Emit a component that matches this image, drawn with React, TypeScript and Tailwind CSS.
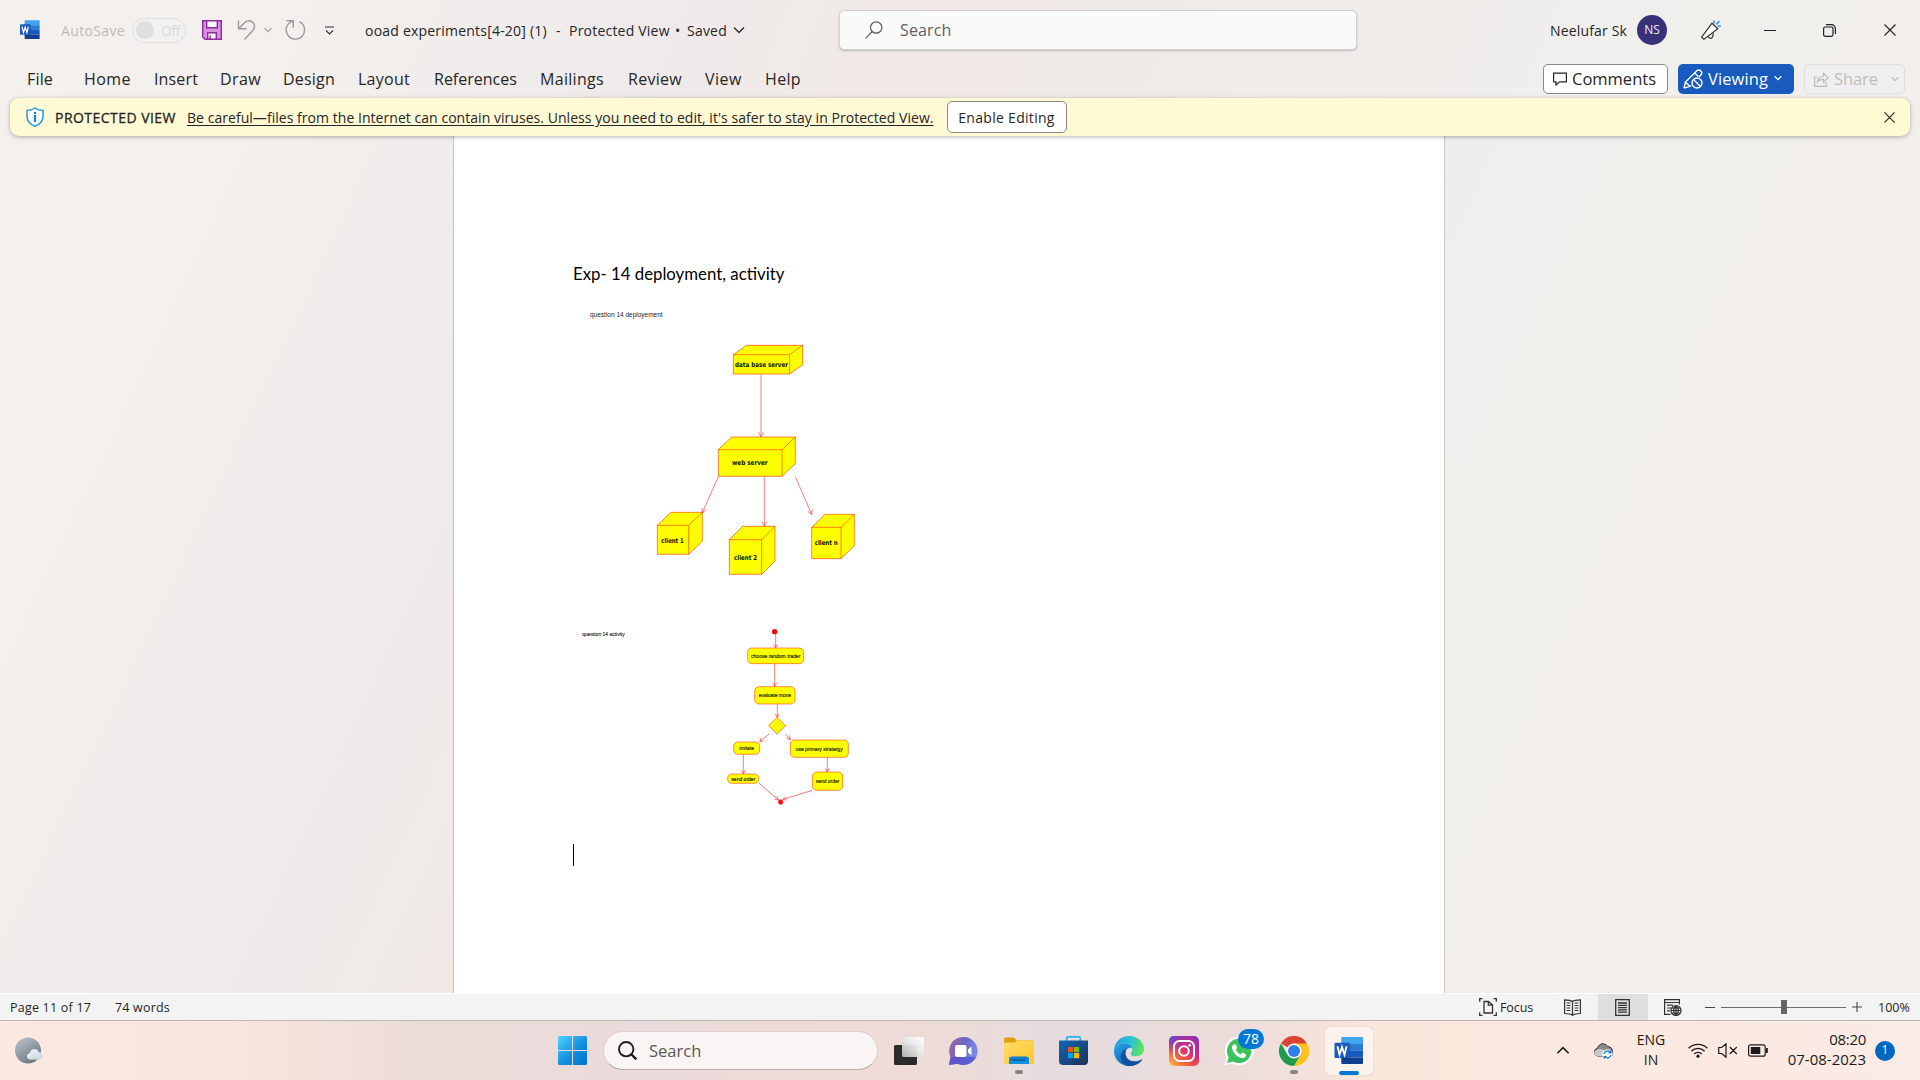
import React from 'react';

type Pt = [number, number];

const Chevron = ({ className, w = 1.3 }: { className: string; w?: number }) => (
  <svg viewBox="0 0 12 8" className={className} fill="none" stroke="currentColor" strokeWidth={w}>
    <path d="M1 1.5 6 6.5 11 1.5" />
  </svg>
);

const Cross = ({ className }: { className: string }) => (
  <svg viewBox="0 0 12 12" className={className} fill="none" stroke="currentColor" strokeWidth="1.2">
    <path d="M.5.5 11.5 11.5M11.5.5.5 11.5" />
  </svg>
);

const WordLogo = ({ className }: { className: string }) => (
  <svg viewBox="0 0 30 29" className={className}>
    <path d="M8 0h20.5a1 1 0 0 1 1 1v6.5H7V1a1 1 0 0 1 1-1z" fill="#41a5ee" />
    <path d="M7 7.3h22.5v7H7z" fill="#2b7cd3" />
    <path d="M7 14.2h22.5v7H7z" fill="#185abd" />
    <path d="M7 21.2h22.5V27a1 1 0 0 1-1 1H8a1 1 0 0 1-1-1z" fill="#103f91" />
    <rect x="7" y="6.5" width="9.5" height="17" fill="#0b2f6b" opacity=".3" />
    <rect x="0" y="6" width="15.5" height="15.8" rx="1.3" fill="#185abd" />
    <path d="M3 9.5 5.2 18.3 7.75 10.4 10.3 18.3 12.5 9.5" fill="none" stroke="#fff" strokeWidth="1.9" />
  </svg>
);

function TitleBar() {
  return (
    <div className="flex h-[60px] items-center pl-5 text-[14px] text-[#262626]">
      <WordLogo className="h-5 w-5" />
      <span className="ml-[21px] w-[71px] tracking-[0.35px] text-[#bdbbba]">AutoSave</span>
      <div className="flex h-[25px] w-[54px] items-center rounded-full border border-[#dfdfe0] bg-[#f1f1f2] pl-[3px]">
        <div className="h-[18px] w-[18px] rounded-full bg-[#dfdfdf]" />
        <span className="ml-[7px] tracking-[-0.6px] text-[#dadada]">Off</span>
      </div>
      <svg viewBox="0 0 20 20" className="ml-4 h-5 w-5" stroke="#8d2c9b" strokeWidth="1.4">
        <path d="M.7.7h18.6v18.6H3L.7 17z" fill="#d98ee0" />
        <path d="M4.7.7h10.6v7H4.7z" fill="#faf5fb" />
        <path d="M5.7 19.3v-6.6h8.6v6.6z" fill="#faf5fb" />
        <path d="M8.2 15.5v3.5" />
      </svg>
      <svg viewBox="0 0 20 20" className="ml-[15px] h-5 w-5" fill="none" stroke="#9c9a99" strokeWidth="1.4">
        <path d="M1.5.5v8.2h8M1.8 8.4 7 3.2C10-.4 14.5.2 16.4 3c1.6 2.5 1.3 5.3-.6 7.5L7.5 19.5" />
      </svg>
      <Chevron className="ml-[7px] h-[6px] w-2 text-[#a5a3a2]" w={2} />
      <svg viewBox="0 0 21 20" className="ml-[13px] h-5 w-[21px]" fill="none" stroke="#9c9a99" strokeWidth="1.4">
        <path d="M1.5.7h6.8v7M14.5 1.7a9.2 9.2 0 1 1-8.8.3L8.2.9" />
      </svg>
      <svg viewBox="0 0 9 9" className="ml-[19px] h-[9px] w-[9px]" fill="none" stroke="#333" strokeWidth="1.2">
        <path d="M0 1h9M1 4.5l3.5 3.5L8 4.5" />
      </svg>
      <div className="ml-[31px] flex w-[474px] items-center whitespace-nowrap tracking-[0.21px]">
        <span className="w-[191px]">ooad experiments[4-20] (1)</span>
        <span className="w-[13px]">-</span>
        <span className="w-[106px]">Protected View</span>
        <span className="w-3">•</span>
        <span className="w-[46px]">Saved</span>
        <Chevron className="h-2 w-3" />
      </div>
      <div className="flex h-10 w-[518px] items-center rounded-[5px] border border-[#d2d0ce] bg-[#fafafa] pl-[25px] shadow-[0_1px_2px_rgba(0,0,0,0.22)]">
        <svg viewBox="0 0 18 18" className="h-[18px] w-[18px]" fill="none" stroke="#605e5c" strokeWidth="1.2">
          <circle cx="11.2" cy="6.5" r="5.7" />
          <path d="M7.2 10.5.6 17.3" />
        </svg>
        <span className="ml-[17px] text-[16px] tracking-[0.14px] text-[#616161]">Search</span>
      </div>
      <span className="ml-[193px] w-[87px] whitespace-nowrap tracking-[0.16px]">Neelufar Sk</span>
      <div className="flex h-[30px] w-[30px] items-center justify-center rounded-full bg-[#373277] text-[12px] text-[#f0ecff]">NS</div>
      <svg viewBox="0 0 20 20" className="ml-[34px] h-5 w-5" fill="none" stroke="#333" strokeWidth="1.2">
        <path d="M.7 17.2 11 3.2l5.8 5.6L3 19.2z" fill="#fff" />
        <path d="M7.2 16.3c1 3.4 5.3 2.8 4.9-3.5" />
        <path d="M13 3.5V.5M15.3 4.6 18.3 1M16.6 6.3l3.2-.4" stroke="#2b88d8" strokeWidth="1.5" />
      </svg>
      <div className="ml-[43px] h-px w-3 bg-[#222]" />
      <svg viewBox="0 0 13 13" className="ml-[47px] h-[13px] w-[13px]" fill="none" stroke="#222" strokeWidth="1.2">
        <rect x=".6" y="3" width="9.4" height="9.4" rx="1.8" />
        <path d="M3 .7h5.4a4 4 0 0 1 4 4v5.3" />
      </svg>
      <Cross className="ml-[48px] h-3 w-3" />
    </div>
  );
}

function MenuBar() {
  return (
    <div className="flex h-[38px] items-center pb-px pl-[27px] text-[16px] text-[#262626] *:pt-px">
      <span className="w-[57px] tracking-[0.17px]">File</span>
      <span className="w-[70px] tracking-[0.45px]">Home</span>
      <span className="w-[66px] tracking-[0.14px]">Insert</span>
      <span className="w-[63px] tracking-[0.39px]">Draw</span>
      <span className="w-[75px] tracking-[0.21px]">Design</span>
      <span className="w-[76px] tracking-[0.27px]">Layout</span>
      <span className="w-[106px]">References</span>
      <span className="w-[88px] tracking-[0.31px]">Mailings</span>
      <span className="w-[77px] tracking-[0.29px]">Review</span>
      <span className="w-[60px] tracking-[0.51px]">View</span>
      <span className="tracking-[0.35px]">Help</span>
      <div className="mr-[15px] ml-auto flex gap-[10px] text-[16.5px]">
        <div className="flex h-[30px] w-[125px] items-center rounded-[5px] border border-[#8a8886] bg-white pl-[9px]">
          <svg viewBox="0 0 14 14" className="h-[14px] w-[14px]" fill="none" stroke="#262626" strokeWidth="1.2">
            <path d="M.6 1.2h12.8v8.6H6.5L3 13V9.8H.6z" />
          </svg>
          <span className="ml-[5px] pt-px">Comments</span>
        </div>
        <div className="flex h-[30px] w-[116px] items-center rounded-[5px] bg-[#185abd] pl-[5px] text-white">
          <svg viewBox="0 0 20 20" className="h-5 w-5" fill="none" stroke="#fff" strokeWidth="1.4">
            <path d="M1 19.2 2.4 13 13.8 1.8c2.6-2.3 6.5 1.2 4.2 4L16 8M8.3 16.8 1 19.2M11.7 4l3.6 3.6M2.6 13.3l4.2 4" />
            <circle cx="14" cy="14" r="5" />
            <path d="m10.5 10.5 7 7" />
          </svg>
          <span className="ml-[5px] pt-px tracking-[0.1px]">Viewing</span>
          <Chevron className="mb-0.5 ml-[6px] h-[6px] w-2" w={2} />
        </div>
        <div className="flex h-[30px] w-[101px] items-center rounded-[5px] border border-[#dedede] bg-[#f0efef] pl-[9px] text-[#bdbdbd]">
          <svg viewBox="0 0 15 15" className="h-[15px] w-[15px]" fill="none" stroke="currentColor" strokeWidth="1.2">
            <path d="M3.5 5H.6v9.4h11.6V10.5M3.5 9.6c.6-3.5 2.6-5 6-5.1V1.3l4.6 4.6-4.6 4.5V7.4c-3-.1-4.5.6-6 2.2z" />
          </svg>
          <span className="ml-[5px] pt-px tracking-[-0.1px]">Share</span>
          <Chevron className="ml-[13px] h-[6px] w-2" w={2} />
        </div>
      </div>
    </div>
  );
}

function ProtectedBanner() {
  return (
    <div className="relative z-10 mx-[10px] flex h-[38px] items-center rounded-[9px] bg-[#fff9d4] pl-4 text-[14px] whitespace-nowrap text-[#262626] shadow-[0_1px_4px_rgba(0,0,0,0.3)]">
      <svg viewBox="0 0 18 20" className="h-5 w-[18px]" fill="#fff" stroke="#2f96d4" strokeWidth="1.5">
        <path d="M9 1c2.3 1.7 5 2.5 8 2.6V9c0 5-3 8.3-8 10.2C4 17.3 1 14 1 9V3.6C4 3.5 6.7 2.7 9 1z" />
        <path d="M9 8v7M9 5v2" stroke="#1180d0" strokeWidth="2.2" />
      </svg>
      <span className="ml-[11px] w-[132px] tracking-[0.46px] [-webkit-text-stroke:0.3px_#262626]">PROTECTED VIEW</span>
      <span className="w-[760px] tracking-[0.042px] underline underline-offset-2">Be careful—files from the Internet can contain viruses. Unless you need to edit, it's safer to stay in Protected View.</span>
      <button className="h-8 w-[120px] rounded-[5px] border border-[#8a8886] bg-white pr-px tracking-[0.3px]">Enable Editing</button>
      <Cross className="mr-[15px] ml-auto h-[11px] w-[11px]" />
    </div>
  );
}

const Arrow = ({ from: [x1, y1], to: [x2, y2], s = 15 }: { from: Pt; to: Pt; s?: number }) => {
  const a = Math.atan2(y2 - y1, x2 - x1);
  const tip = (d: number) => `${x2 - s * Math.cos(a + d)} ${y2 - s * Math.sin(a + d)}`;
  return <path d={`M${x1} ${y1}L${x2} ${y2}M${tip(0.52)}L${x2} ${y2}L${tip(-0.52)}`} fill="none" stroke="#ff0000" strokeOpacity=".52" strokeWidth="3" />;
};

const cubes = [
  { x: 520, y: 314, w: 169, h: 58, dx: 39, dy: 28, label: 'data base server', tx: 525, tw: 159, ty: 350 },
  { x: 475, y: 599, w: 191, h: 80, dx: 40, dy: 38, label: 'web server', tx: 516, tw: 107, ty: 645 },
  { x: 292, y: 826, w: 94, h: 87, dx: 41, dy: 39, label: 'client 1', tx: 304, tw: 67, ty: 878 },
  { x: 508, y: 869, w: 97, h: 104, dx: 40, dy: 40, label: 'client 2', tx: 522, tw: 69, ty: 929 },
  { x: 755, y: 832, w: 88, h: 94, dx: 40, dy: 39, label: 'client n', tx: 764, tw: 69, ty: 886 },
];

const DeploymentDiagram = () => (
  <svg viewBox="0 120 1200 900" className="mt-[2px] block h-[300px] w-[400px]">
    <text x="90" y="200" fontSize="21" textLength="218" lengthAdjust="spacingAndGlyphs" fill="#222" className="font-['Liberation_Sans']">question 14 deployement</text>
    {cubes.map((c) => (
      <g key={c.label}>
        <path
          d={`M${c.x} ${c.y}l${c.dx} ${-c.dy}h${c.w}v${c.h}l${-c.dx} ${c.dy}h${-c.w}zM${c.x} ${c.y}h${c.w}v${c.h}M${c.x + c.w} ${c.y}l${c.dx} ${-c.dy}`}
          fill="#ffff00"
          stroke="#ff3000"
          strokeOpacity=".6"
          strokeWidth="3"
        />
        <text x={c.tx} y={c.ty} fontSize="20" fontWeight="700" textLength={c.tw} lengthAdjust="spacingAndGlyphs" fill="#111100" className="font-['DejaVu_Sans']">{c.label}</text>
      </g>
    ))}
    <Arrow from={[603, 373]} to={[603, 560]} />
    <Arrow from={[475, 680]} to={[427, 788]} />
    <Arrow from={[613, 680]} to={[613, 828]} />
    <Arrow from={[706, 680]} to={[755, 793]} />
  </svg>
);

const steps = [
  { x: 563, y: 144, w: 168, h: 47, label: 'choose random trader', tx: 573, tw: 148, ty: 174 },
  { x: 584, y: 260, w: 121, h: 52, label: 'evaluate move', tx: 596, tw: 97, ty: 292 },
  { x: 521, y: 426, w: 78, h: 37, label: 'imitate', tx: 538, tw: 44, ty: 451 },
  { x: 503, y: 522, w: 93, h: 28, label: 'send order', tx: 514, tw: 72, ty: 542 },
  { x: 691, y: 420, w: 174, h: 52, label: 'use primary stratergy', tx: 707, tw: 141, ty: 453 },
  { x: 757, y: 516, w: 91, h: 55, label: 'send order', tx: 767, tw: 71, ty: 550 },
];

const ActivityDiagram = () => (
  <svg viewBox="0 0 1200 720" className="mt-[10px] block h-[240px] w-[400px]">
    <text x="67" y="107" fontSize="17" textLength="127" lengthAdjust="spacingAndGlyphs" fill="#222" stroke="#222" strokeWidth=".4" className="font-['Liberation_Sans']">question 14 activity</text>
    <circle cx="644" cy="95" r="8" fill="#ff0000" />
    {steps.map((s, i) => (
      <g key={i}>
        <rect x={s.x} y={s.y} width={s.w} height={s.h} rx="13" fill="#ffff00" stroke="#ff3000" strokeOpacity=".55" strokeWidth="3" />
        <text x={s.tx} y={s.ty} fontSize="18" textLength={s.tw} lengthAdjust="spacingAndGlyphs" fill="#222200" stroke="#222200" strokeWidth=".5" className="font-['Liberation_Sans']">{s.label}</text>
      </g>
    ))}
    <path d="M651 352 677 377 651 402 626 377z" fill="#ffff00" stroke="#ff3000" strokeOpacity=".55" strokeWidth="3" />
    <Arrow from={[647, 102]} to={[647, 143]} s={12} />
    <Arrow from={[644, 192]} to={[644, 259]} s={12} />
    <Arrow from={[652, 313]} to={[652, 352]} s={12} />
    <Arrow from={[627, 402]} to={[599, 425]} s={12} />
    <Arrow from={[676, 402]} to={[691, 419]} s={12} />
    <Arrow from={[550, 464]} to={[550, 521]} s={12} />
    <Arrow from={[802, 473]} to={[802, 515]} s={12} />
    <Arrow from={[596, 549]} to={[655, 600]} s={12} />
    <Arrow from={[757, 571]} to={[669, 598]} s={12} />
    <circle cx="662" cy="606" r="7.5" fill="#ff0000" stroke="#ff7070" strokeWidth="2" />
  </svg>
);

function StatusBar() {
  return (
    <div className="flex h-7 items-center border-t border-b border-t-white border-b-[#bdb5b3] bg-[#f3f3f3] pl-[10px] text-[12.5px] text-[#262626]">
      <span className="w-[105px] pt-0.5 tracking-[0.22px]">Page 11 of 17</span>
      <span className="pt-0.5 tracking-[0.19px]">74 words</span>
      <svg viewBox="0 0 18 18" className="ml-auto h-[18px] w-[18px]" fill="none" stroke="#333" strokeWidth="1.3">
        <path d="M3.5.7H.7v3M14.5.7h2.8v3M3.5 17.3H.7v-3M14.5 17.3h2.8v-3M5 3.5h4.5L13.5 7v8H5zM9.3 3.5V7.2h4" />
      </svg>
      <span className="ml-[3px] w-[64px] pt-0.5 tracking-[-0.1px]">Focus</span>
      <svg viewBox="0 0 17 17" className="h-[17px] w-[17px]" fill="none" stroke="#333" strokeWidth="1.2">
        <path d="M8.5 2.5C6.5.8 3.5.8.6.8v13.7c3 0 6 0 7.9 1.8 2-1.8 5-1.8 7.9-1.8V.8c-3 0-6 0-7.9 1.7zM8.5 2.5v14M2.6 4h3.8M2.6 6.5h3.8M2.6 9h3.8M2.6 11.5h3.8M10.6 4h3.8M10.6 6.5h3.8M10.6 9h3.8M10.6 11.5h3.8" />
      </svg>
      <div className="ml-[17px] flex h-[26px] w-[50px] items-center justify-center bg-[#dfdfdf]">
        <svg viewBox="0 0 15 17" className="mr-px h-[17px] w-[15px]" fill="none" stroke="#333" strokeWidth="1.3">
          <path d="M.7.7h13.6v15.6H.7zM3 4h9M3 6.3h9M3 8.6h9M3 10.9h9M3 13.2h9" />
        </svg>
      </div>
      <svg viewBox="0 0 18 17" className="ml-4 h-[17px] w-[18px]" fill="none" stroke="#333" strokeWidth="1.2">
        <path d="M6.5 15.4H.6V.6h14.8v5M.6 3.5h14.8M3 6.2h6M3 9h4M3 11.8h3" />
        <circle cx="12" cy="11.5" r="5" fill="#f3f3f3" />
        <path d="M7 11.5h10M12 6.5v10M12 6.5c-3.2 3-3.2 7 0 10M12 6.5c3.2 3 3.2 7 0 10M8 9h8M8 14h8" />
      </svg>
      <div className="ml-[23px] h-px w-[10px] bg-[#444]" />
      <div className="ml-[6px] flex h-[26px] w-[125px] items-center">
        <div className="h-px w-[60px] bg-[#6d6d6d]" />
        <div className="h-[14px] w-[6px] bg-[#666]" />
        <div className="h-px flex-1 bg-[#6d6d6d]" />
      </div>
      <svg viewBox="0 0 10 10" className="ml-[6px] h-[10px] w-[10px]" stroke="#444" strokeWidth="1.1">
        <path d="M0 5h10M5 0v10" />
      </svg>
      <span className="mr-[9px] ml-4 w-[33px] pt-0.5">100%</span>
    </div>
  );
}

const FolderIcon = () => (
  <svg viewBox="0 0 30 28" className="h-7 w-[30px]">
    <defs>
      <linearGradient id="folder" x1="0" y1="0" x2="1" y2="1"><stop offset="0" stopColor="#ffdc6b" /><stop offset="1" stopColor="#fcc52c" /></linearGradient>
      <linearGradient id="clip" x1="0" y1="0" x2="0" y2="1"><stop offset="0" stopColor="#1079d0" /><stop offset="1" stopColor="#1592e0" /></linearGradient>
    </defs>
    <path d="M0 2a1.5 1.5 0 0 1 1.5-1.5h8.3L13 3.5h15.5A1.5 1.5 0 0 1 30 5v8H0z" fill="#dda10c" />
    <path d="M0 7.5c0-1.5.8-2 2-2h8.5l2.500-2h15.500A1.500 1.500 0 0 1 30 5v20.500A1.500 1.500 0 0 1 28.500 27h-27A1.500 1.500 0 0 1 0 25.500z" fill="url(#folder)" />
    <path d="M5 27v-4.500a3 3 0 0 1 3-3h14a3 3 0 0 1 3 3V27z" fill="url(#clip)" />
    <path d="M8.500 23h13" stroke="#0a559c" strokeWidth="1.3" />
  </svg>
);

const StoreIcon = () => (
  <svg viewBox="0 0 29 29" className="h-[29px] w-[29px]">
    <defs><linearGradient id="store" x1="0" y1="0" x2="1" y2="1"><stop offset="0" stopColor="#0f68b4" /><stop offset="1" stopColor="#1e2f58" /></linearGradient></defs>
    <path d="M7.7 6V2.3c0-.9.5-1.4 1.4-1.4h10.8c.9 0 1.4.5 1.4 1.4V6" fill="none" stroke="#2bb5f0" strokeWidth="1.7" />
    <path d="M0 4.500h29V25a4 4 0 0 1-4 4H4a4 4 0 0 1-4-4z" fill="url(#store)" />
    <path d="M9 11h5.200v5.200H9z" fill="#f25022" /><path d="M15 11h5.200v5.200H15z" fill="#7fba00" />
    <path d="M9 17h5.200v5.200H9z" fill="#00a4ef" /><path d="M15 17h5.200v5.200H15z" fill="#ffb900" />
  </svg>
);

const EdgeIcon = () => (
  <svg viewBox="0 0 30 30" className="h-[30px] w-[30px]">
    <defs>
      <linearGradient id="edgeTop" x1="0" y1=".3" x2="1" y2=".5"><stop offset="0" stopColor="#1b9de2" /><stop offset=".55" stopColor="#2cc3d0" /><stop offset="1" stopColor="#62e552" /></linearGradient>
      <linearGradient id="edgeLeft" x1="0" y1="0" x2=".6" y2="1"><stop offset="0" stopColor="#2aa5ea" /><stop offset="1" stopColor="#0f62b8" /></linearGradient>
    </defs>
    <path d="M0 14C.8 5.500 7.200 0 15 0c8.600 0 15 6 15 12.700 0 4.300-3.200 7.600-7.800 7.600-3.600 0-5.400-1.200-5.400-2.400 0-.9 1.400-1.500 1.400-4C18.200 10.500 14.500 7.300 9.500 7.300 5 7.300 1.500 10 0 14z" fill="url(#edgeTop)" />
    <path d="M0 14c1.500-4.300 5-6.700 9.500-6.700 4.200 0 7.500 2 8.500 4.700-3-1.200-7.200 1.500-7.200 6.500 0 6 5 9.800 9.200 10.700A15 15 0 0 1 0 14z" fill="url(#edgeLeft)" />
    <path d="M12.500 12.700C9.500 19 13.500 26 22 25.200c2.500-.3 4.300-1.300 5.500-1.800.6-.2.900.3.500.8-2 2.800-6.600 5.800-11.500 5.700C9 29.500 6.200 23.500 6.800 19.500c.4-3.200 2.600-5.800 5.700-6.800z" fill="#10529c" />
  </svg>
);

const InstagramIcon = () => (
  <svg viewBox="0 0 30 30" className="h-[30px] w-[30px]">
    <defs>
      <linearGradient id="insta" x1=".9" y1="0" x2=".1" y2="1"><stop offset="0" stopColor="#8a2fc0" /><stop offset=".4" stopColor="#d5297b" /><stop offset=".72" stopColor="#f5603c" /><stop offset="1" stopColor="#fdb44b" /></linearGradient>
      <radialGradient id="instaBlue" cx=".05" cy="0" r=".6"><stop offset="0" stopColor="#4a4fd8" /><stop offset="1" stopColor="#7a35c8" stopOpacity="0" /></radialGradient>
    </defs>
    <rect width="30" height="30" rx="5" fill="url(#insta)" /><rect width="30" height="30" rx="5" fill="url(#instaBlue)" />
    <rect x="5" y="5" width="20" height="20" rx="5.5" fill="none" stroke="#fff" strokeWidth="2" />
    <circle cx="15" cy="15" r="4.8" fill="none" stroke="#fff" strokeWidth="2" /><circle cx="20.7" cy="9.3" r="1.3" fill="#fff" />
  </svg>
);

const ChromeIcon = () => (
  <svg viewBox="0 0 30 30" className="h-[30px] w-[30px]">
    <path d="M15 15 2 7.500A15 15 0 0 1 28 7.500z" fill="#dd4335" />
    <path d="M28 7.500A15 15 0 0 1 15 30l6.500-11.200L15 7.500z" fill="#fcc31e" />
    <path d="M30 15A15 15 0 0 1 15 30" fill="#fcc31e" />
    <path d="M15 30A15 15 0 0 1 2 7.500l6.500 11.200 13 .1z" fill="#1f9a4c" />
    <circle cx="15" cy="15" r="7.5" fill="#fff" /><circle cx="15" cy="15" r="6" fill="#2f7de9" />
  </svg>
);

const Dot = () => <div className="absolute bottom-[6px] h-1 w-2 rounded-full bg-[#8a8280]" />;

function Taskbar() {
  return (
    <div className="flex h-[59px] items-center bg-[linear-gradient(90deg,#fbe9e2_0%,#f9e5dc_12%,#ecdcd9_22%,#ebdadb_34%,#f0dbd7_46%,#e5dcde_56%,#ecdcd9_64%,#fae7dc_72%,#fce8de_82%,#faebe5_100%)] pl-[15px] text-[#1b1b1b]">
      <svg viewBox="0 0 28 27" className="h-[27px] w-7">
        <defs>
          <linearGradient id="moon" x1=".2" y1="0" x2=".8" y2="1"><stop offset="0" stopColor="#b4c0ca" /><stop offset="1" stopColor="#6a727b" /></linearGradient>
          <linearGradient id="puff" x1="0" y1="0" x2="1" y2="1"><stop offset="0" stopColor="#f2f6f9" /><stop offset="1" stopColor="#c8d5df" /></linearGradient>
        </defs>
        <circle cx="13" cy="13.5" r="13" fill="url(#moon)" />
        <path d="M14.500 22.500a3.200 3.200 0 0 1 .3-6.300c1-5 7.500-5.500 9-1 4.500-.2 5.500 6.500 1 7.300z" fill="url(#puff)" />
      </svg>
      <svg viewBox="0 0 29 29" className="ml-[515px] h-[29px] w-[29px]">
        <defs><linearGradient id="win" x1="0" y1="0" x2="29" y2="29" gradientUnits="userSpaceOnUse"><stop offset="0" stopColor="#4fd3ff" /><stop offset=".55" stopColor="#1490df" /><stop offset="1" stopColor="#0070d0" /></linearGradient></defs>
        <path d="M1.500 0H14v14H0V1.500A1.500 1.500 0 0 1 1.500 0zM15 0h12.500A1.500 1.500 0 0 1 29 1.500V14H15zM0 15h14v14H1.500A1.500 1.500 0 0 1 0 27.500zM15 15h14v12.500a1.500 1.500 0 0 1-1.500 1.500H15z" fill="url(#win)" />
      </svg>
      <div className="ml-4 flex h-[39px] w-[275px] items-center rounded-full border border-[#dccfcc] border-b-[#b9abab] bg-[#f9f5f4] pl-[14px]">
        <svg viewBox="0 0 19 19" className="h-[19px] w-[19px]" fill="none" stroke="#1c1c1c" strokeWidth="1.9">
          <circle cx="8.2" cy="8.2" r="7.2" /><path d="m13 13 5.300 5.300" strokeWidth="2.4" />
        </svg>
        <span className="ml-3 pt-0.5 text-[16.5px] text-[#5a5858]">Search</span>
      </div>
      <div className="ml-[3px] flex h-full *:relative *:flex *:h-full *:w-[55px] *:items-center *:justify-center">
        <div>
          <svg viewBox="0 0 30 28" className="h-7 w-[30px]">
            <defs><linearGradient id="pane" x1="0" y1="1" x2="1" y2="0"><stop offset="0" stopColor="#b9b9b9" /><stop offset=".5" stopColor="#e8e6e6" /><stop offset="1" stopColor="#fff" /></linearGradient></defs>
            <rect y="8" width="23" height="20" rx="1.5" fill="#2c2b2a" /><rect x="8" y="0" width="22" height="20" rx="1.5" fill="url(#pane)" opacity=".95" />
          </svg>
        </div>
        <div>
          <svg viewBox="0 0 29 28" className="h-7 w-[29px]">
            <defs><linearGradient id="chat" x1=".1" y1=".2" x2=".9" y2=".5"><stop offset="0" stopColor="#9466a8" /><stop offset=".5" stopColor="#6a66c8" /><stop offset="1" stopColor="#7a86e2" /></linearGradient></defs>
            <path d="M14.500 0a14 14 0 1 1-5.800 26.700L0 28l1.500-8A14 14 0 0 1 14.500 0z" fill="url(#chat)" />
            <path d="M1.500 20 0 28l8.700-1.300A14 14 0 0 0 27 20z" fill="#5450cc" opacity=".7" />
            <rect x="6" y="8" width="11.500" height="12" rx="2" fill="#fff" /><path d="m19 12.500 3.500-3v9l-3.500-3z" fill="#fff" />
          </svg>
        </div>
        <div><FolderIcon /><Dot /></div>
        <div><StoreIcon /></div>
        <div><EdgeIcon /></div>
        <div><InstagramIcon /></div>
        <div>
          <svg viewBox="0 0 30 30" className="h-[30px] w-[30px]">
            <path d="M.5 29.500 2.600 21.800A14.500 14.500 0 1 1 8 27.400z" fill="#fff" />
            <path d="M3 27 4.700 21.200A12.200 12.200 0 1 1 9 25.400z" fill="#3cc25a" />
            <path d="M10.300 8.200c-2.300.8-3 3.300-1.500 6.200 2 4.200 5.700 7.200 9.500 7.600 2.700 0 4-1.500 3.800-3.600l-3.400-1.800-2 1.900c-2-.8-4-2.700-5-4.800l1.500-1.800-1.400-3.500z" fill="#fff" />
          </svg>
          <span className="absolute top-[8px] left-[27px] flex h-5 w-[26px] items-center justify-center rounded-full bg-[#0078d4] text-[14px] leading-none text-white">78</span>
        </div>
        <div><ChromeIcon /><Dot /></div>
        <div>
          <div className="relative flex h-12 w-12 items-center justify-center rounded-[5px] bg-[#fcf3ef] shadow-[0_0_1px_rgba(0,0,0,0.3)]">
            <WordLogo className="h-7 w-[30px]" />
            <div className="absolute bottom-0 h-1 w-5 rounded-full bg-[#0078d4]" />
          </div>
        </div>
      </div>
      <Chevron className="ml-[180px] h-[9px] w-[14px] rotate-180" w={1.4} />
      <svg viewBox="0 0 20 18" className="ml-[23px] h-[18px] w-5">
        <path d="M4.500 14a4 4 0 0 1 0-7.800C6 1 12 .2 14.500 4.500c3.500 0 5 2.500 5 5V14z" fill="#8a8a8a" stroke="#333" strokeWidth="1" />
        <path d="M1 10.500C3 7 8 5.500 12 9l3 5H4.500C2.500 14 1 12.500 1 10.500z" fill="#c9c9c9" />
        <circle cx="14.500" cy="12.500" r="5.300" fill="#fff" />
        <path d="M11 12a3.600 3.600 0 0 1 6.500-1.500M18 13a3.600 3.600 0 0 1-6.500 1.500M17.800 8.500v2.300h-2.300M11.200 16.800v-2.300h2.300" fill="none" stroke="#0a6cc8" strokeWidth="1.2" />
      </svg>
      <div className="ml-[22px] flex w-[32px] flex-col items-center pb-0.5 text-[14px] leading-5"><span>ENG</span><span>IN</span></div>
      <svg viewBox="0 0 20 15" className="ml-[21px] h-[15px] w-5" fill="none" stroke="#1b1b1b" strokeWidth="1.3">
        <path d="M.6 5.300a13.300 13.300 0 0 1 18.800 0M3.400 8.200a9.300 9.300 0 0 1 13.200 0M6.200 11a5.400 5.400 0 0 1 7.600 0" /><circle cx="10" cy="13.200" r="1.600" fill="#1b1b1b" stroke="none" />
      </svg>
      <svg viewBox="0 0 20 15" className="ml-[10px] h-[15px] w-5" fill="none" stroke="#1b1b1b" strokeWidth="1.2">
        <path d="M.7 4.500h3L8 .8v13.400L3.700 10.500h-3zM11.800 4l7 7M18.800 4l-7 7" />
      </svg>
      <svg viewBox="0 0 20 13" className="ml-[10px] h-[13px] w-5" fill="none" stroke="#1b1b1b" strokeWidth="1.2">
        <rect x=".6" y=".8" width="16.6" height="11.4" rx="2" /><rect x="2.8" y="3" width="9.5" height="7" rx=".5" fill="#1b1b1b" stroke="none" /><path d="M18.900 4v5" strokeWidth="1.8" />
      </svg>
      <div className="ml-[18px] flex w-[80px] flex-col items-end pb-1 text-[15px] leading-5"><span className="tracking-[-0.3px]">08:20</span><span>07-08-2023</span></div>
      <div className="ml-[9px] flex h-5 w-5 items-center justify-center rounded-full bg-[#0067c0] pb-px text-[12px] text-white">1</div>
    </div>
  );
}

export default function App() {
  return (
    <div className="flex h-[1080px] w-[1920px] flex-col overflow-hidden bg-[linear-gradient(115deg,#f4f0ed_0%,#f3efec_14%,#efebeb_26%,#f0e9e6_38%,#f0ebe8_52%,#f0efed_66%,#f1efeb_76%,#f3eeeb_88%,#f2eeeb_100%)] font-['Open_Sans',sans-serif] text-black">
      <TitleBar />
      <MenuBar />
      <ProtectedBanner />
      <div className="flex min-h-0 flex-1">
        <div className="ml-[453px] w-[992px] border-x border-[#c8c6c5] bg-white pt-[124px] pl-[106px]">
          <div className="h-7 pl-[13px] font-['Lato'] text-[16.8px] leading-7">Exp- 14 deployment, activity</div>
          <DeploymentDiagram />
          <ActivityDiagram />
          <div className="mt-1 ml-[13px] h-[22px] w-px bg-black" />
        </div>
      </div>
      <StatusBar />
      <Taskbar />
    </div>
  );
}
